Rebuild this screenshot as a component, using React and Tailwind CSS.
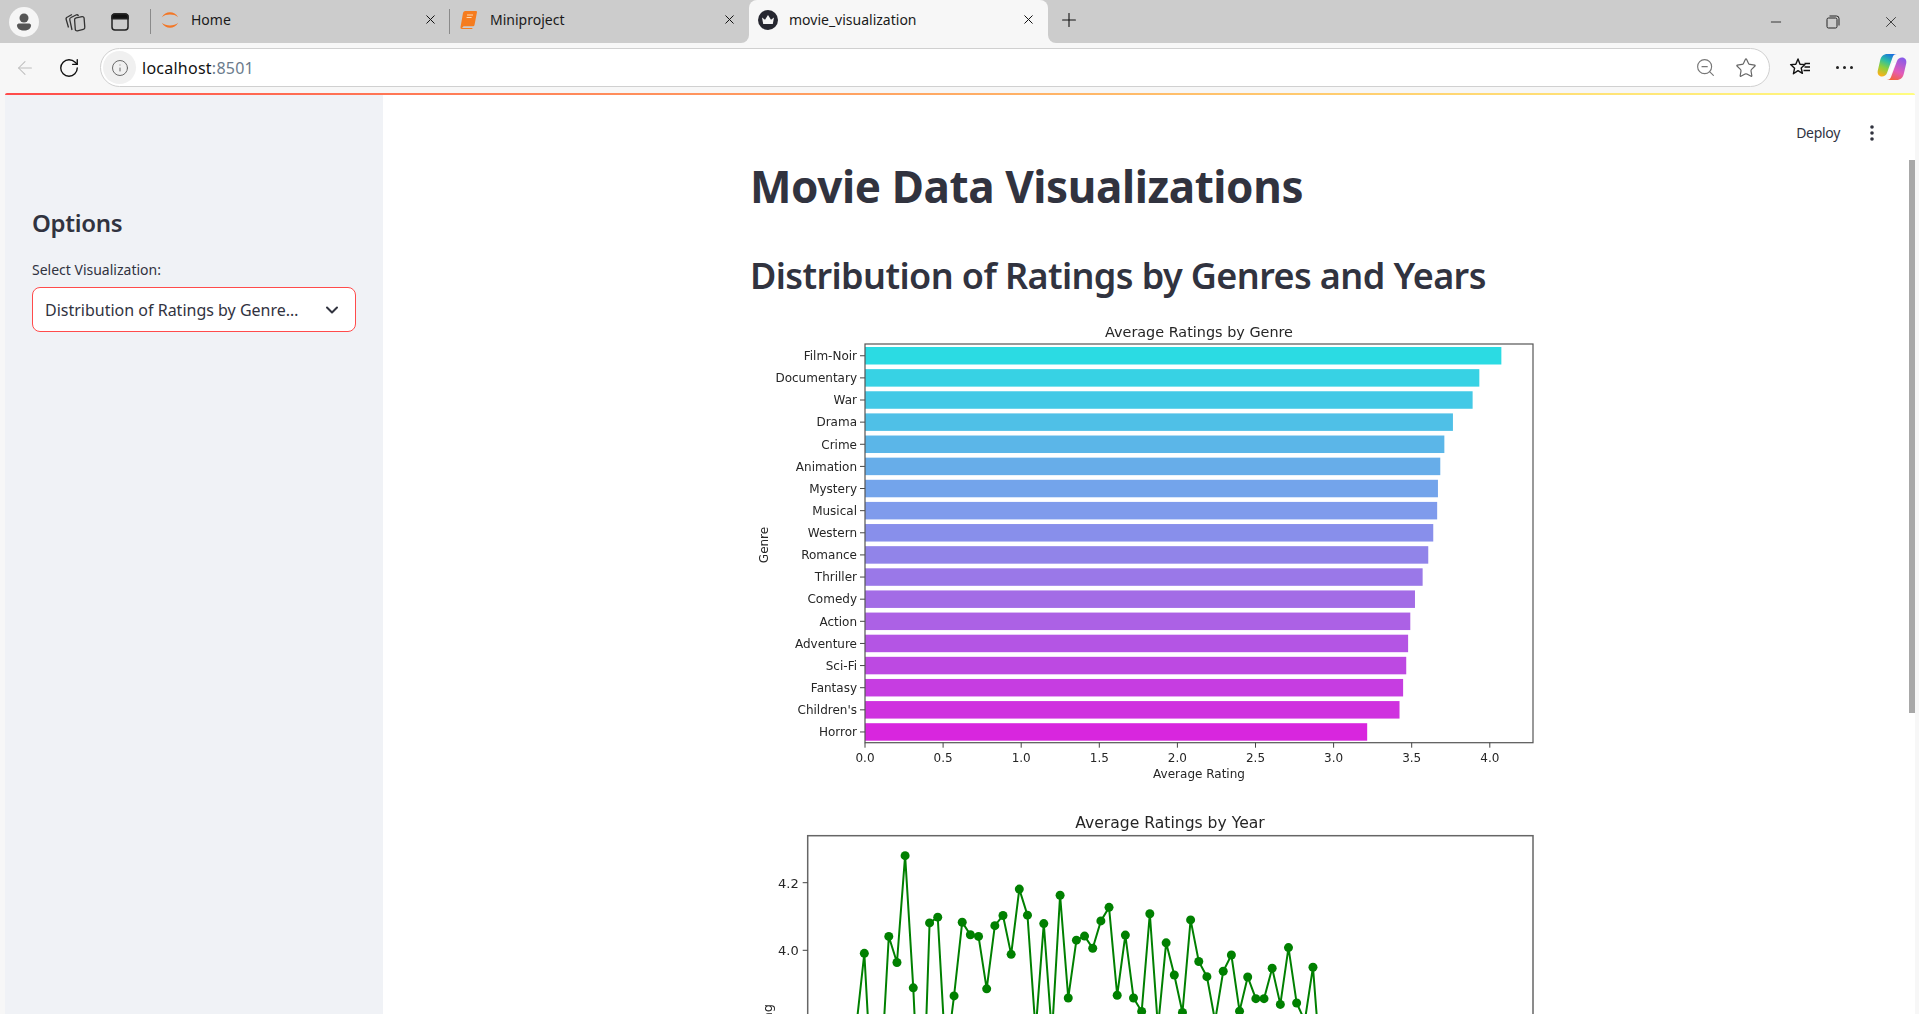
import { ArrowLeft, ChevronDown, Info, Minus, Plus, RotateCw, Star, X, ZoomOut } from 'lucide-react'

const genres = [
  ['Film-Noir', 4.074],
  ['Documentary', 3.933],
  ['War', 3.89],
  ['Drama', 3.764],
  ['Crime', 3.709],
  ['Animation', 3.683],
  ['Mystery', 3.668],
  ['Musical', 3.663],
  ['Western', 3.638],
  ['Romance', 3.606],
  ['Thriller', 3.57],
  ['Comedy', 3.521],
  ['Action', 3.491],
  ['Adventure', 3.477],
  ['Sci-Fi', 3.465],
  ['Fantasy', 3.445],
  ["Children's", 3.422],
  ['Horror', 3.215],
]

const yearRatings = [
  3.771, 3.991, 3.554, 3.615, 4.041, 3.964, 4.28, 3.889, 3.377, 4.081, 4.098, 3.673, 3.865, 4.083, 4.046,
  4.041, 3.886, 4.073, 4.103, 3.988, 4.181, 4.104, 3.761, 4.079, 3.751, 4.163, 3.859, 4.03, 4.042, 4.006,
  4.087, 4.127, 3.867, 4.045, 3.859, 3.819, 4.108, 3.771, 4.022, 3.927, 3.816, 4.09, 3.967, 3.922, 3.791,
  3.938, 3.986, 3.82, 3.921, 3.857, 3.857, 3.947, 3.84, 4.008, 3.844, 3.791, 3.95, 3.638,
]

// cyan to magenta ramp, with a lighter blue stop at the Musical bar
function barColor(i) {
  const stops = i <= 7 ? [[43, 219, 227], [127, 155, 236]] : [[127, 155, 236], [216, 38, 222]]
  const t = i <= 7 ? i / 7 : (i - 7) / 10
  const [r, g, b] = stops[0].map((v, k) => Math.round(v + (stops[1][k] - v) * t))
  return `rgb(${r},${g},${b})`
}

function GenreChart() {
  const left = 114
  const top = 23
  const right = 782
  const bottom = 421.7
  const perUnit = 156.2
  const ticks = [0, 0.5, 1, 1.5, 2, 2.5, 3, 3.5, 4]

  return (
    <svg width="792" height="470" className="block font-['DejaVu_Sans',sans-serif] blur-[0.3px]">
      <text x="448" y="16" textAnchor="middle" fontSize="14.4" fill="#262626">Average Ratings by Genre</text>
      {genres.map(([name, rating], i) => {
        const y = 26 + i * 22.13
        return (
          <g key={name}>
            <rect x={left} y={y} width={rating * perUnit} height="17.5" fill={barColor(i)} />
            <line x1={left - 5} x2={left} y1={y + 8.75} y2={y + 8.75} stroke="#444" />
            <text x={left - 8} y={y + 13} textAnchor="end" fontSize="12" fill="#262626">{name}</text>
          </g>
        )
      })}
      <rect x={left} y={top} width={right - left} height={bottom - top} fill="none" stroke="#555" strokeWidth="1.2" />
      {ticks.map((t) => (
        <g key={t}>
          <line x1={left + t * perUnit} x2={left + t * perUnit} y1={bottom} y2={bottom + 5} stroke="#444" />
          <text x={left + t * perUnit} y={bottom + 19} textAnchor="middle" fontSize="12" fill="#262626">{t.toFixed(1)}</text>
        </g>
      ))}
      <text x="448" y="457" textAnchor="middle" fontSize="12" fill="#262626">Average Rating</text>
      <text transform="translate(17 224) rotate(-90)" textAnchor="middle" fontSize="12" fill="#262626">Genre</text>
    </svg>
  )
}

function YearChart() {
  const left = 56.7
  const top = 34.7
  const right = 782
  const yFor = (r) => 149.3 - (r - 4) * 338
  const points = yearRatings.map((r, i) => [105.17 + i * 8.157, yFor(r)])

  return (
    <svg width="792" height="500" className="block font-['DejaVu_Sans',sans-serif] blur-[0.3px]">
      <text x="419" y="27" textAnchor="middle" fontSize="15.6" fill="#262626">Average Ratings by Year</text>
      <rect x={left} y={top} width={right - left} height="440" fill="none" stroke="#666" strokeWidth="1.5" />
      <polyline points={points.map((p) => p.join(',')).join(' ')} fill="none" stroke="#008000" strokeWidth="2" />
      {points.map(([x, y]) => (
        <circle key={x} cx={x} cy={y} r="4.5" fill="#008000" />
      ))}
      {[4.2, 4.0, 3.8].map((t) => (
        <g key={t}>
          <line x1={left - 5} x2={left} y1={yFor(t)} y2={yFor(t)} stroke="#444" />
          <text x={left - 9} y={yFor(t) + 5} textAnchor="end" fontSize="13" fill="#262626">{t.toFixed(1)}</text>
        </g>
      ))}
      <text transform="translate(21 203) rotate(-90)" textAnchor="end" fontSize="13" fill="#262626">Average Rating</text>
    </svg>
  )
}

function JupyterIcon() {
  return (
    <svg width="22" height="22" viewBox="0 0 22 22" fill="#f37726">
      <path d="M2 8C4 4 7.500 2.500 11 2.500S18 4 20 8C17.500 5.800 14.500 5 11 5S4.500 5.800 2 8Z" />
      <path d="M2 14C4 18 7.500 19.500 11 19.500S18 18 20 14C17.500 16.200 14.500 17 11 17S4.500 16.200 2 14Z" />
    </svg>
  )
}

function BookIcon() {
  return (
    <svg width="18" height="20" viewBox="0 0 18 20">
      <path d="M5 1h11a1 1 0 0 1 1 1l-2.500 13a1.500 1.500 0 0 1-1.500 1.200H3.500L2 18h10.500l-.3 1H2a1.500 1.500 0 0 1-1.500-1.800L3 3a2.500 2.500 0 0 1 2-2Z" fill="#f57c1f" />
      <path d="M7 5h6M6.600 7.500h5" stroke="#ffd9b0" strokeWidth="1" />
    </svg>
  )
}

function CrownIcon() {
  return (
    <svg width="20" height="20" viewBox="0 0 20 20">
      <circle cx="10" cy="10" r="10" fill="#262730" />
      <path d="M4 7.500l3 2.200L10 5l3 4.700 3-2.200-1.200 6.500H5.200Z" fill="#f5f5f5" />
    </svg>
  )
}

function CollectionsIcon() {
  return (
    <svg width="24" height="24" viewBox="0 0 24 24" fill="none" stroke="#333" strokeWidth="1.3" strokeLinejoin="round">
      <path d="M5.500 17.500 3.200 9.500A2 2 0 0 1 4.500 7L9 4.500" />
      <path d="M9 20 6.800 9.800A2 2 0 0 1 8 7.500L13 5a2 2 0 0 1 2.500.8" />
      <path d="M11.600 10a2 2 0 0 1 1.500-2.200l6-1.200a1.700 1.700 0 0 1 2 1.500l.7 9a2 2 0 0 1-1.500 2.200l-6 1.600a1.700 1.700 0 0 1-2-1.500Z" fill="#ccc" />
    </svg>
  )
}

function VerticalTabsIcon() {
  return (
    <svg width="20" height="20" viewBox="0 0 20 20" fill="none" stroke="#222" strokeWidth="1.5">
      <rect x="2" y="2" width="16" height="16" rx="3" />
      <path d="M2 6.500V5a3 3 0 0 1 3-3h10a3 3 0 0 1 3 3v1.500Z" fill="#111" />
      <path d="M2.500 7H18" strokeWidth="0.7" />
    </svg>
  )
}

function RestoreIcon() {
  return (
    <svg width="14" height="14" viewBox="0 0 14 14" fill="none" stroke="#222" strokeWidth="1">
      <rect x="1" y="3" width="10" height="10" rx="1.500" />
      <path d="M3.500 1h7A2.500 2.500 0 0 1 13 3.500v7" />
    </svg>
  )
}

function FavoritesIcon() {
  return (
    <svg width="22" height="20" viewBox="0 0 22 20" fill="none" stroke="#111" strokeWidth="1.4" strokeLinejoin="round">
      <path d="M9 2l2 5.200 5 .4-3.800 3.400 1.200 5.400L9 13.600 4.400 16.800 5.600 11.200 1.600 7.600l5.200-.4Z" />
      <path d="M15.500 6.500H21M15.500 10H21M14.500 13.500H21" />
    </svg>
  )
}

function CopilotIcon() {
  return (
    <svg width="30" height="28" viewBox="0 0 30 28">
      <defs>
        <linearGradient id="copilotLeft" x1="0.3" y1="1" x2="0.7" y2="0">
          <stop offset="0" stopColor="#f7b21a" />
          <stop offset="0.35" stopColor="#8ccf3e" />
          <stop offset="0.65" stopColor="#2bbfa5" />
          <stop offset="1" stopColor="#1a6fe0" />
        </linearGradient>
        <linearGradient id="copilotRight" x1="0.3" y1="1" x2="0.7" y2="0">
          <stop offset="0" stopColor="#f4633a" />
          <stop offset="0.4" stopColor="#e35cb8" />
          <stop offset="1" stopColor="#8a5be8" />
        </linearGradient>
      </defs>
      <path d="M10.500 1H20c-2.500 0-3.600 1.200-4.300 3L10 20c-.8 2.300-2.700 3.500-5 3.500-3 0-4.800-2.400-4.300-5.500L3 8C3.800 3.600 6.500 1 10.500 1Z" fill="url(#copilotLeft)" />
      <path d="M19.500 27H9.500c2.500 0 3.800-1.200 4.500-3L20 8c.8-2.300 2.700-3.500 5-3.500 3 0 4.800 2.400 4.300 5.500L27 20c-.8 4.400-3.500 7-7.500 7Z" fill="url(#copilotRight)" />
      <path d="M15.500 10h3l-4 9.500a3 3 0 0 1-2.700 1.500Z" fill="#fff" />
    </svg>
  )
}

function Tab({ icon, title, active, divider }) {
  return (
    <div className={`relative flex h-full w-[299px] items-center pb-[4px] pl-[9px] pr-[12px] ${active ? 'rounded-t-lg bg-[#f7f7f7]' : ''}`}>
      <div className="flex w-[20px] justify-center">{icon}</div>
      <span className="ml-[11px] flex-1 font-['Noto_Sans',sans-serif] text-[14px] tracking-[0px] text-[#1a1a1a]">{title}</span>
      <X size={15} strokeWidth={1.6} color="#111" />
      {divider && <div className="absolute right-0 top-[9px] h-[25px] w-px bg-[#8a8a8a]" />}
      {active && (
        <>
          <div className="absolute bottom-0 left-[-8px] size-[8px] bg-[#f7f7f7]">
            <div className="size-full rounded-br-lg bg-[#cccccc]" />
          </div>
          <div className="absolute bottom-0 right-[-8px] size-[8px] bg-[#f7f7f7]">
            <div className="size-full rounded-bl-lg bg-[#cccccc]" />
          </div>
        </>
      )}
    </div>
  )
}

function BrowserChrome() {
  return (
    <>
      <div className="flex h-[43px] items-center bg-[#cccccc] pl-[9px]">
        <div className="flex size-[30px] items-center justify-center overflow-hidden rounded-full bg-[#f5f5f5]">
          <svg width="18" height="20" viewBox="0 0 18 20" fill="#555">
            <circle cx="9" cy="6" r="4.500" />
            <path d="M2 13.500c0-1.400 1.200-2 2.500-2h9c1.300 0 2.500.6 2.500 2 0 3-3 5-7 5s-7-2-7-5Z" />
          </svg>
        </div>
        <div className="ml-[24px]"><CollectionsIcon /></div>
        <div className="ml-[23px]"><VerticalTabsIcon /></div>
        <div className="ml-[20px] h-[25px] w-px bg-[#8a8a8a]" />
        <Tab icon={<JupyterIcon />} title="Home" divider />
        <Tab icon={<BookIcon />} title="Miniproject" />
        <Tab icon={<CrownIcon />} title="movie_visualization" active />
        <div className="mb-[3px] ml-[10px]"><Plus size={22} strokeWidth={1.2} color="#111" /></div>
        <div className="ml-auto flex items-center">
          <div className="flex w-[54px] justify-center"><Minus size={16} strokeWidth={1.2} color="#111" /></div>
          <div className="flex w-[60px] justify-center"><RestoreIcon /></div>
          <div className="flex w-[56px] justify-center"><X size={18} strokeWidth={1} color="#111" /></div>
        </div>
      </div>
      <div className="flex h-[50px] items-start bg-[#f7f7f7] pt-[5px]">
        <div className="flex h-[39px] w-[100px] items-center">
          <div className="ml-[14px]"><ArrowLeft size={22} strokeWidth={1.1} color="#bdbdbd" /></div>
          <div className="ml-[22px]"><RotateCw size={22} strokeWidth={1.5} color="#111" /></div>
        </div>
        <div className="flex h-[39px] w-[1670px] items-center rounded-full border border-[#d0d0d0] bg-white pl-[2px] pr-[12px]">
          <div className="flex size-[33px] items-center justify-center rounded-full bg-[#f0f0f0]">
            <Info size={18} strokeWidth={1.3} color="#666" />
          </div>
          <span className="ml-[6px] font-['Noto_Sans',sans-serif] text-[16px] tracking-[0.25px] text-[#111]">
            localhost<span className="text-[#6b7b8c]">:8501</span>
          </span>
          <div className="ml-auto flex items-center gap-[19px]">
            <ZoomOut size={21} strokeWidth={1.3} color="#777" />
            <Star size={22} strokeWidth={1.3} color="#666" />
          </div>
        </div>
        <div className="ml-[19px] mt-[9px]"><FavoritesIcon /></div>
        <div className="ml-[25px] mt-[18px] flex gap-[4px]">
          <span className="size-[3px] rounded-full bg-[#222]" />
          <span className="size-[3px] rounded-full bg-[#222]" />
          <span className="size-[3px] rounded-full bg-[#222]" />
        </div>
        <div className="ml-[24px] mt-[5px]"><CopilotIcon /></div>
      </div>
    </>
  )
}

function Sidebar() {
  return (
    <aside className="w-[378px] shrink-0 bg-[#f0f2f6] pl-[27px] pr-[27px] pt-[107px] font-['Noto_Sans',sans-serif] text-[#31333f]">
      <h2 className="text-[24px] font-semibold leading-[42px] tracking-[-0.3px]">Options</h2>
      <label className="mt-[16px] block text-[14px] leading-[20px] tracking-[0px]">Select Visualization:</label>
      <div className="mt-[7px] flex h-[45px] w-[324px] items-center rounded-lg border border-[#ff4b4b] bg-white pl-[12px] pr-[13px]">
        <span className="flex-1 truncate text-[16px] tracking-[0px]">Distribution of Ratings by Genre…</span>
        <ChevronDown size={20} strokeWidth={2.4} color="#31333f" className="ml-[19px]" />
      </div>
    </aside>
  )
}

function Main() {
  return (
    <main className="relative flex-1 overflow-hidden bg-white pr-[4px] font-['Noto_Sans',sans-serif] text-[#31333f]">
      <div className="absolute right-[41px] top-[27px] flex items-center gap-[30px]">
        <span className="text-[14px] tracking-[-0.3px]">Deploy</span>
        <svg width="4" height="16" viewBox="0 0 4 16" fill="#31333f">
          <circle cx="2" cy="2" r="1.800" />
          <circle cx="2" cy="8" r="1.800" />
          <circle cx="2" cy="14" r="1.800" />
        </svg>
      </div>
      <div className="absolute right-0 top-[65px] h-[553px] w-[6px] bg-[#a8a8a8]" />
      <div className="mx-auto w-[792px] pt-[60px]">
        <h1 className="ml-[-1px] text-[44px] font-bold leading-[62px] tracking-[-0.4px]">Movie Data Visualizations</h1>
        <h2 className="ml-[-1px] mt-[34px] text-[36px] font-semibold leading-[50px] tracking-[-0.6px]">Distribution of Ratings by Genres and Years</h2>
        <div className="mt-[20px]"><GenreChart /></div>
        <div className="mt-[10px]"><YearChart /></div>
      </div>
    </main>
  )
}

export default function App() {
  return (
    <div className="flex h-[1014px] w-[1919px] flex-col overflow-hidden bg-[#f7f7f7]">
      <BrowserChrome />
      <div className="flex min-h-0 flex-1 flex-col pl-[5px] pr-[4px]">
        <div className="h-[2px] shrink-0 rounded-t-xl bg-gradient-to-r from-[#ff4b4b] to-[#fffd80]" />
        <div className="flex min-h-0 flex-1">
          <Sidebar />
          <Main />
        </div>
      </div>
    </div>
  )
}
